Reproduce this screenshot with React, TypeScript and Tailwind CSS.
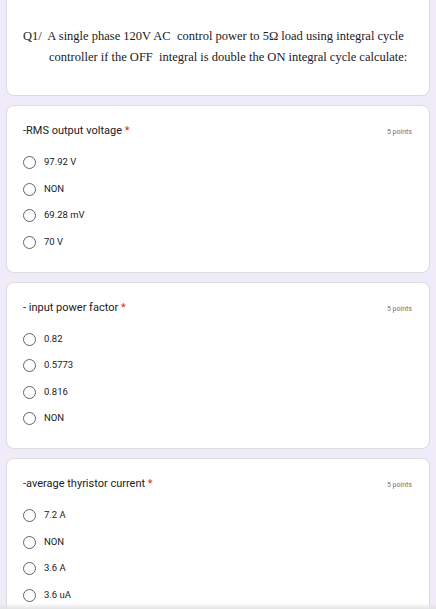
import React from 'react'

type Question = {
  title: string
  options: string[]
}

const questions: Question[] = [
  { title: '-RMS output voltage', options: ['97.92 V', 'NON', '69.28 mV', '70 V'] },
  { title: '- input power factor', options: ['0.82', '0.5773', '0.816', 'NON'] },
  { title: '-average thyristor current', options: ['7.2 A', 'NON', '3.6 A', '3.6 uA'] },
]

const Radio = () => (
  <span className="w-[13px] h-[13px] rounded-full border-[1.5px] border-[#5f6368] shrink-0" />
)

const QuestionCard = ({ q }: { q: Question }) => (
  <div className="bg-white rounded-lg border border-[#dadce0] px-4 pt-4 pb-[23px]">
    <div className="flex items-start justify-between h-[18px]">
      <div className="text-[11px] leading-[18px] text-[#202124]">
        {q.title} <span className="text-[#d93025]">*</span>
      </div>
      <div className="text-[7px] leading-[18px] text-[#70757a] pr-[1px] mt-[1px]">5 points</div>
    </div>
    <div className="flex flex-col gap-[13.5px] mt-[16px]">
      {q.options.map((o) => (
        <div key={o} className="flex items-center gap-[8px] h-[13px]">
          <Radio />
          <span className="text-[9.5px] text-[#202124]">{o}</span>
        </div>
      ))}
    </div>
  </div>
)

const App = () => {
  return (
    <div className="relative h-[609px] overflow-hidden bg-[#f0ebf8] px-[6px]" style={{ fontFamily: 'Roboto, Arial, sans-serif' }}>
      <div className="bg-white rounded-b-lg border border-t-0 border-[#dadce0] h-[96px] px-4 pt-[26px]">
        <div className="text-[12.5px] leading-[21px] text-[#202124]" style={{ fontFamily: '"Liberation Serif", "Times New Roman", serif' }}>
          <div>Q1/&nbsp; A single phase 120V AC&nbsp; control power to 5Ω load using integral cycle</div>
          <div className="pl-[26px]">controller if the OFF&nbsp; integral is double the ON integral cycle calculate:</div>
        </div>
      </div>
      <div className="flex flex-col gap-[9px] mt-[9px]">
        {questions.map((q) => (
          <QuestionCard key={q.title} q={q} />
        ))}
      </div>
      <div className="absolute left-0 right-0 bottom-0 h-[6px] bg-gradient-to-b from-transparent to-[#e4e4e4]" />
    </div>
  )
}

export default App
